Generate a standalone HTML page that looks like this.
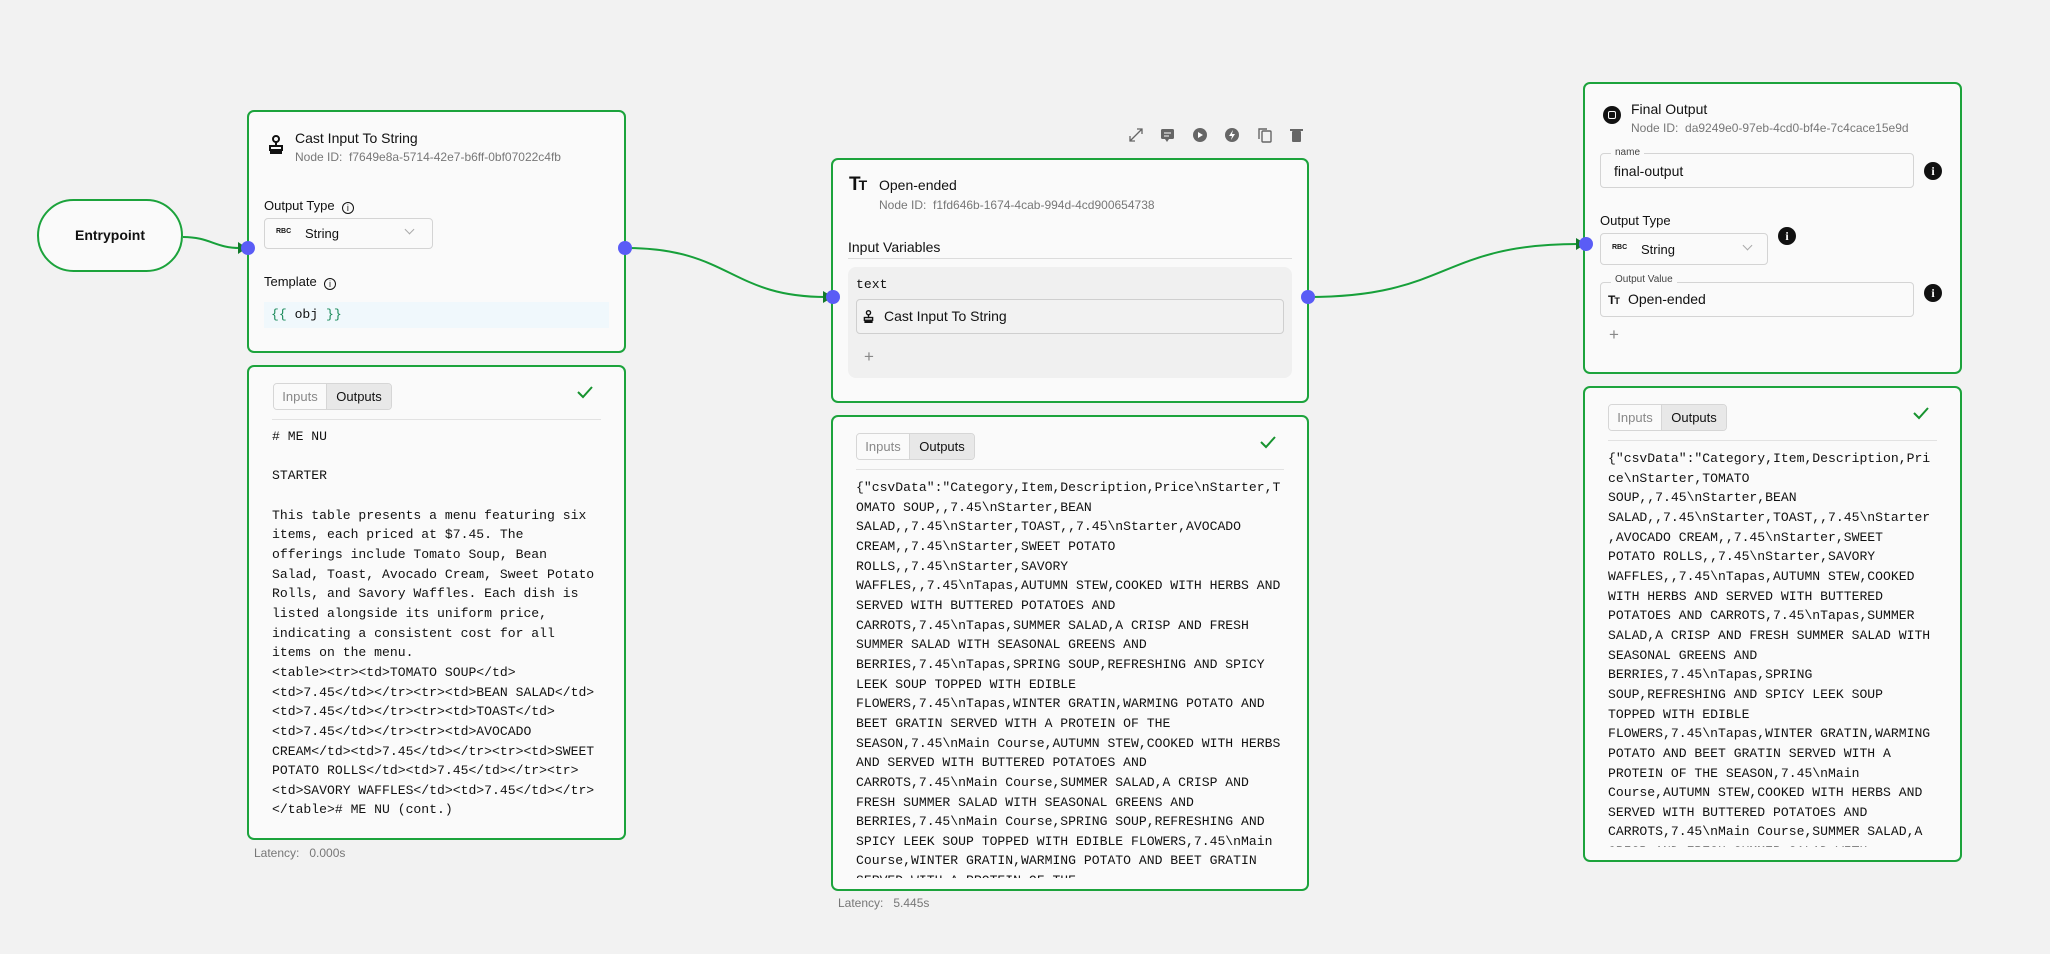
<!DOCTYPE html>
<html><head><meta charset="utf-8"><style>
*{box-sizing:border-box;margin:0;padding:0}
body{width:2050px;height:954px;background:#f2f2f2;position:relative;overflow:hidden;font-family:"Liberation Sans",sans-serif;color:#111}
.a{position:absolute}
.card{position:absolute;background:#fafafa;border:2px solid #1ca33c;border-radius:7px}
.h{position:absolute;width:14px;height:14px;border-radius:50%;background:#5a5cf6;margin:-7px 0 0 -7px}
.t{font-size:14px;line-height:16px}
.id{font-size:12px;color:#777;line-height:14px}
.lbl{font-size:13px;line-height:15px}
.mono{position:absolute;font-family:"Liberation Mono",monospace;font-size:13.1px;line-height:19.65px;white-space:pre;overflow:hidden;color:#111}
.tabs{position:absolute;height:27px;display:flex;border:1px solid #d6d6d6;border-radius:4px;overflow:hidden;font-size:13px}
.tabs div{line-height:25px;text-align:center}
.tabs .i{width:53px;color:#888;background:#fafafa;border-right:1px solid #d6d6d6}
.tabs .o{width:64px;background:#e8e8e8}
.div{position:absolute;height:1px;background:#e2e2e2}
.box{position:absolute;border:1px solid #d4d4d4;border-radius:4px;background:#fafafa}
.lat{position:absolute;font-size:12px;color:#777}
.info{position:absolute;width:18px;height:18px;border-radius:50%;background:#111;color:#fff;font:bold 12px/18px "Liberation Serif",serif;text-align:center}
</style></head><body>
<svg class="a" style="left:0;top:0" width="2050" height="954">
<g fill="none" stroke="#17a03a" stroke-width="2">
<path d="M183 237 C210 237 215 248 240 248"/>
<path d="M626 248 C730 248 730 297 826 297"/>
<path d="M1308 297 C1450 297 1440 244 1578 244"/>
</g>
<g fill="#127a2b">
<path d="M238 242 L247 248 L238 254Z"/>
<path d="M823 291 L833 297 L823 303Z"/>
<path d="M1576 238 L1586 244 L1576 250Z"/>
</g>
</svg>

<!-- Entrypoint -->
<div class="a" style="left:37px;top:199px;width:146px;height:73px;border:2px solid #1ca33c;border-radius:37px;background:#fafafa;text-align:center;line-height:69px;font-weight:bold;font-size:14px">Entrypoint</div>

<!-- Node1 -->
<div class="card" style="left:247px;top:110px;width:379px;height:243px"></div>
<svg class="a" style="left:268px;top:135px" width="16" height="19" viewBox="0 0 16 19"><circle cx="8" cy="4" r="3" fill="none" stroke="#111" stroke-width="2"/><path d="M8 7v5" stroke="#111" stroke-width="2"/><rect x="2" y="11" width="12" height="4" fill="none" stroke="#111" stroke-width="2"/><rect x="2" y="16" width="12" height="3" fill="#111"/></svg>
<div class="a t" style="left:295px;top:130px">Cast Input To String</div>
<div class="a id" style="left:295px;top:150px">Node ID:&nbsp; f7649e8a-5714-42e7-b6ff-0bf07022c4fb</div>
<div class="a lbl" style="left:264px;top:198px">Output Type &nbsp;<span style="display:inline-block;width:12px;height:12px;border:1.3px solid #111;border-radius:50%;font-size:9px;line-height:10px;text-align:center;vertical-align:-1px">i</span></div>
<div class="box" style="left:264px;top:218px;width:169px;height:31px"></div>
<div class="a" style="left:276px;top:228px;font-size:7px;font-weight:bold">RBC</div>
<div class="a lbl" style="left:305px;top:226px">String</div>
<div class="a" style="left:406px;top:226px;width:7px;height:7px;border-right:1.3px solid #aaa;border-bottom:1.3px solid #aaa;transform:rotate(45deg)"></div>
<div class="a lbl" style="left:264px;top:274px">Template &nbsp;<span style="display:inline-block;width:12px;height:12px;border:1.3px solid #111;border-radius:50%;font-size:9px;line-height:10px;text-align:center;vertical-align:-1px">i</span></div>
<div class="a" style="left:264px;top:302px;width:345px;height:26px;background:#f0f8fc"></div>
<div class="mono" style="left:271px;top:306px;line-height:18px"><span style="color:#1a8a5a">{{</span> obj <span style="color:#1a8a5a">}}</span></div>
<div class="h" style="left:248px;top:248px"></div>
<div class="h" style="left:625px;top:248px"></div>

<!-- Node1 output -->
<div class="card" style="left:247px;top:365px;width:379px;height:475px"></div>
<div class="tabs" style="left:273px;top:383px"><div class="i">Inputs</div><div class="o">Outputs</div></div>
<svg class="a" style="left:576px;top:385px" width="18" height="14"><path d="M2 7l5 5L16 2" fill="none" stroke="#17932f" stroke-width="2"/></svg>
<div class="div" style="left:272px;top:419px;width:329px"></div>
<div class="mono" style="left:272px;top:427px"># ME NU

STARTER

This table presents a menu featuring six
items, each priced at $7.45. The
offerings include Tomato Soup, Bean
Salad, Toast, Avocado Cream, Sweet Potato
Rolls, and Savory Waffles. Each dish is
listed alongside its uniform price,
indicating a consistent cost for all
items on the menu.
&lt;table&gt;&lt;tr&gt;&lt;td&gt;TOMATO SOUP&lt;/td&gt;
&lt;td&gt;7.45&lt;/td&gt;&lt;/tr&gt;&lt;tr&gt;&lt;td&gt;BEAN SALAD&lt;/td&gt;
&lt;td&gt;7.45&lt;/td&gt;&lt;/tr&gt;&lt;tr&gt;&lt;td&gt;TOAST&lt;/td&gt;
&lt;td&gt;7.45&lt;/td&gt;&lt;/tr&gt;&lt;tr&gt;&lt;td&gt;AVOCADO
CREAM&lt;/td&gt;&lt;td&gt;7.45&lt;/td&gt;&lt;/tr&gt;&lt;tr&gt;&lt;td&gt;SWEET
POTATO ROLLS&lt;/td&gt;&lt;td&gt;7.45&lt;/td&gt;&lt;/tr&gt;&lt;tr&gt;
&lt;td&gt;SAVORY WAFFLES&lt;/td&gt;&lt;td&gt;7.45&lt;/td&gt;&lt;/tr&gt;
&lt;/table&gt;# ME NU (cont.)</div>
<div class="lat" style="left:254px;top:846px">Latency:&nbsp;&nbsp; 0.000s</div>

<!-- Toolbar -->
<svg class="a" style="left:1128px;top:127px" width="180" height="16" viewBox="0 0 180 16" fill="#666" stroke="#666">
<path d="M2 14L14 2M9 2h5v5M2 9v5h5" fill="none" stroke-width="1.3"/>
<rect x="33" y="2" width="13" height="10" rx="1.5" stroke="none"/><path d="M37 12l2 3 2-3" stroke="none"/><path d="M36 6h7M36 9h5" stroke="#fff" stroke-width="1"/>
<circle cx="72" cy="8" r="7" stroke="none"/><path d="M70 5v6l5-3z" fill="#fff" stroke="none"/>
<circle cx="104" cy="8" r="7" stroke="none"/><path d="M105 3l-4 6h3l-1 4 4-6h-3z" fill="#fff" stroke="none"/>
<rect x="134" y="4" width="9" height="11" rx="1" fill="none" stroke-width="1.4"/><path d="M131 12V2h8" fill="none" stroke-width="1.4"/>
<rect x="164" y="4" width="9" height="11" rx="1" stroke="none"/><rect x="162" y="2" width="13" height="2" stroke="none"/>
</svg>

<!-- Node2 -->
<div class="card" style="left:831px;top:158px;width:478px;height:245px"></div>
<div class="a" style="left:849px;top:175px;font-weight:bold;font-size:19px;line-height:20px;letter-spacing:-2px">T<span style="font-size:14px">T</span></div>
<div class="a t" style="left:879px;top:177px">Open-ended</div>
<div class="a id" style="left:879px;top:198px">Node ID:&nbsp; f1fd646b-1674-4cab-994d-4cd900654738</div>
<div class="a" style="left:848px;top:239px;font-size:14px">Input Variables</div>
<div class="div" style="left:848px;top:258px;width:444px;background:#dcdcdc"></div>
<div class="a" style="left:848px;top:267px;width:444px;height:111px;background:#f0f0f0;border-radius:8px"></div>
<div class="mono" style="left:856px;top:276px;line-height:18px">text</div>
<div class="a" style="left:856px;top:299px;width:428px;height:35px;border:1px solid #cfcfcf;border-radius:4px;background:#f2f2f2"></div>
<svg class="a" style="left:863px;top:310px" width="11" height="13" viewBox="0 0 16 19"><circle cx="8" cy="4" r="3" fill="none" stroke="#111" stroke-width="2"/><path d="M8 7v5" stroke="#111" stroke-width="2"/><rect x="2" y="11" width="12" height="4" fill="none" stroke="#111" stroke-width="2"/><rect x="2" y="16" width="12" height="3" fill="#111"/></svg>
<div class="a" style="left:884px;top:308px;font-size:14px">Cast Input To String</div>
<div class="a" style="left:864px;top:347px;font-size:17px;color:#888">+</div>
<div class="h" style="left:833px;top:297px"></div>
<div class="h" style="left:1308px;top:297px"></div>

<!-- Node2 output -->
<div class="card" style="left:831px;top:415px;width:478px;height:476px"></div>
<div class="tabs" style="left:856px;top:433px"><div class="i">Inputs</div><div class="o">Outputs</div></div>
<svg class="a" style="left:1259px;top:435px" width="18" height="14"><path d="M2 7l5 5L16 2" fill="none" stroke="#17932f" stroke-width="2"/></svg>
<div class="div" style="left:856px;top:469px;width:428px"></div>
<div class="mono" style="left:856px;top:478px;height:400px">{"csvData":"Category,Item,Description,Price\nStarter,T
OMATO SOUP,,7.45\nStarter,BEAN
SALAD,,7.45\nStarter,TOAST,,7.45\nStarter,AVOCADO
CREAM,,7.45\nStarter,SWEET POTATO
ROLLS,,7.45\nStarter,SAVORY
WAFFLES,,7.45\nTapas,AUTUMN STEW,COOKED WITH HERBS AND
SERVED WITH BUTTERED POTATOES AND
CARROTS,7.45\nTapas,SUMMER SALAD,A CRISP AND FRESH
SUMMER SALAD WITH SEASONAL GREENS AND
BERRIES,7.45\nTapas,SPRING SOUP,REFRESHING AND SPICY
LEEK SOUP TOPPED WITH EDIBLE
FLOWERS,7.45\nTapas,WINTER GRATIN,WARMING POTATO AND
BEET GRATIN SERVED WITH A PROTEIN OF THE
SEASON,7.45\nMain Course,AUTUMN STEW,COOKED WITH HERBS
AND SERVED WITH BUTTERED POTATOES AND
CARROTS,7.45\nMain Course,SUMMER SALAD,A CRISP AND
FRESH SUMMER SALAD WITH SEASONAL GREENS AND
BERRIES,7.45\nMain Course,SPRING SOUP,REFRESHING AND
SPICY LEEK SOUP TOPPED WITH EDIBLE FLOWERS,7.45\nMain
Course,WINTER GRATIN,WARMING POTATO AND BEET GRATIN
SERVED WITH A PROTEIN OF THE</div>
<div class="lat" style="left:838px;top:896px">Latency:&nbsp;&nbsp; 5.445s</div>

<!-- Node3 -->
<div class="card" style="left:1583px;top:82px;width:379px;height:292px"></div>
<div class="a" style="left:1603px;top:106px;width:18px;height:18px;border-radius:50%;background:#111"></div>
<div class="a" style="left:1608px;top:111px;width:8px;height:8px;border-radius:2px;background:#fafafa;border:0"></div>
<div class="a" style="left:1609px;top:112px;width:6px;height:6px;border-radius:1px;background:#111"></div>
<div class="a t" style="left:1631px;top:101px">Final Output</div>
<div class="a id" style="left:1631px;top:121px">Node ID:&nbsp; da9249e0-97eb-4cd0-bf4e-7c4cace15e9d</div>
<div class="box" style="left:1600px;top:153px;width:314px;height:35px"></div>
<div class="a" style="left:1611px;top:147px;font-size:10px;color:#444;background:#fafafa;padding:0 4px">name</div>
<div class="a" style="left:1614px;top:163px;font-size:14px">final-output</div>
<div class="info" style="left:1924px;top:162px">i</div>
<div class="a lbl" style="left:1600px;top:213px">Output Type</div>
<div class="box" style="left:1600px;top:233px;width:168px;height:32px"></div>
<div class="a" style="left:1612px;top:244px;font-size:7px;font-weight:bold">RBC</div>
<div class="a lbl" style="left:1641px;top:242px">String</div>
<div class="a" style="left:1744px;top:242px;width:7px;height:7px;border-right:1.3px solid #aaa;border-bottom:1.3px solid #aaa;transform:rotate(45deg)"></div>
<div class="info" style="left:1778px;top:227px">i</div>
<div class="box" style="left:1600px;top:282px;width:314px;height:35px"></div>
<div class="a" style="left:1611px;top:274px;font-size:10px;color:#444;background:#fafafa;padding:0 4px">Output Value</div>
<div class="a" style="left:1608px;top:293px;font-weight:bold;font-size:12px;letter-spacing:-1px">T<span style="font-size:9px">T</span></div>
<div class="a" style="left:1628px;top:291px;font-size:14px">Open-ended</div>
<div class="info" style="left:1924px;top:284px">i</div>
<div class="a" style="left:1609px;top:325px;font-size:17px;color:#888">+</div>
<div class="h" style="left:1586px;top:244px"></div>

<!-- Node3 output -->
<div class="card" style="left:1583px;top:386px;width:379px;height:476px"></div>
<div class="tabs" style="left:1608px;top:404px"><div class="i">Inputs</div><div class="o">Outputs</div></div>
<svg class="a" style="left:1912px;top:406px" width="18" height="14"><path d="M2 7l5 5L16 2" fill="none" stroke="#17932f" stroke-width="2"/></svg>
<div class="div" style="left:1608px;top:440px;width:329px"></div>
<div class="mono" style="left:1608px;top:449px;height:398px">{"csvData":"Category,Item,Description,Pri
ce\nStarter,TOMATO
SOUP,,7.45\nStarter,BEAN
SALAD,,7.45\nStarter,TOAST,,7.45\nStarter
,AVOCADO CREAM,,7.45\nStarter,SWEET
POTATO ROLLS,,7.45\nStarter,SAVORY
WAFFLES,,7.45\nTapas,AUTUMN STEW,COOKED
WITH HERBS AND SERVED WITH BUTTERED
POTATOES AND CARROTS,7.45\nTapas,SUMMER
SALAD,A CRISP AND FRESH SUMMER SALAD WITH
SEASONAL GREENS AND
BERRIES,7.45\nTapas,SPRING
SOUP,REFRESHING AND SPICY LEEK SOUP
TOPPED WITH EDIBLE
FLOWERS,7.45\nTapas,WINTER GRATIN,WARMING
POTATO AND BEET GRATIN SERVED WITH A
PROTEIN OF THE SEASON,7.45\nMain
Course,AUTUMN STEW,COOKED WITH HERBS AND
SERVED WITH BUTTERED POTATOES AND
CARROTS,7.45\nMain Course,SUMMER SALAD,A
CRISP AND FRESH SUMMER SALAD WITH</div>
</body></html>
